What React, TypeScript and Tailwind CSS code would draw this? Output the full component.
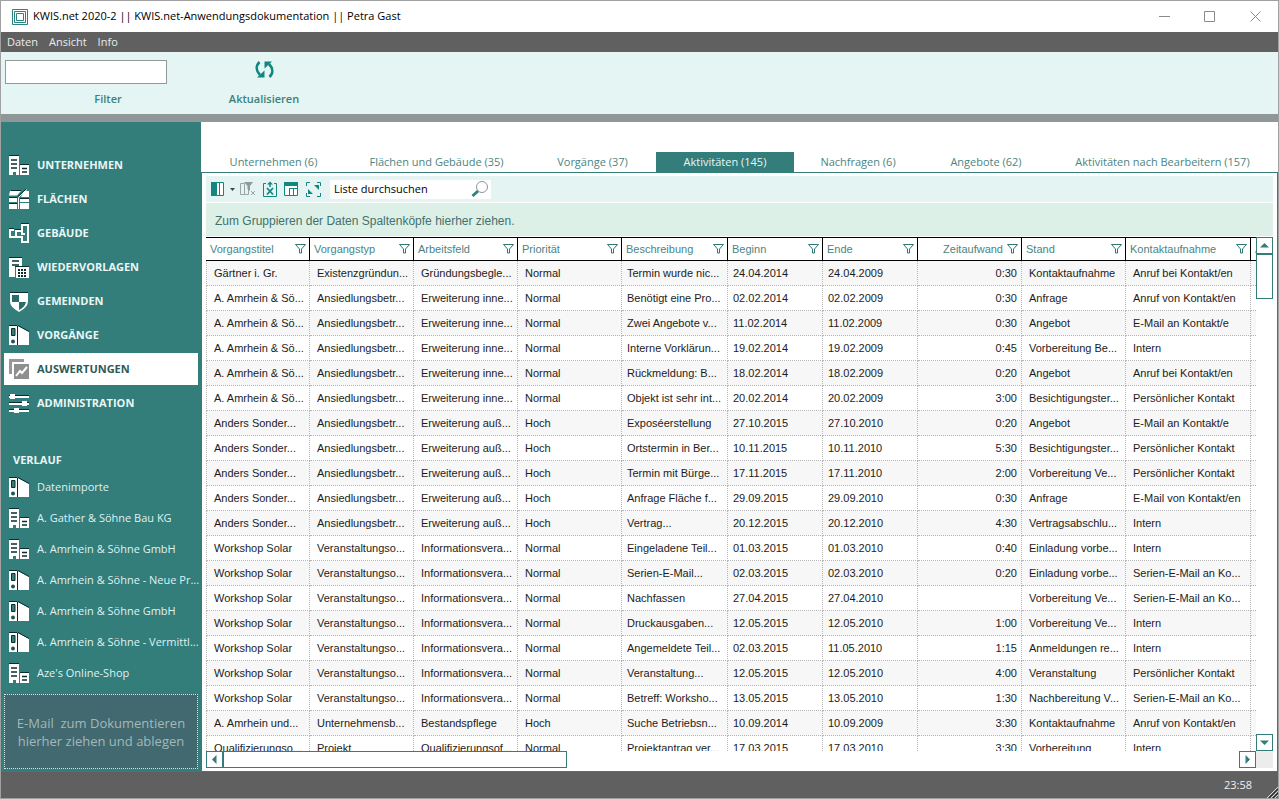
import { useState } from "react";
import type { ReactNode } from "react";

type IconName =
  | "company"
  | "area"
  | "building"
  | "calendar"
  | "shield"
  | "binder"
  | "chart"
  | "sliders";

const DARK = "#0a2e2d";

const icons: Record<IconName, ReactNode> = {
  company: (
    <>
      <path d="M0 1h10v19H7v-3H4v3H0zM11 10h9v10h-9z" fill="#fff" />
      <path d="M0 0.500h10M11 9.500h9" stroke={DARK} />
      <path d="M2 5h6M2 9h6M2 13h6M13 13.500h5M13 17h5" stroke={DARK} strokeWidth="1.600" />
    </>
  ),
  area: (
    <>
      <path d="M1 2h11L8 6.500H0zM15 2h5v6h-8zM0 9h8v4H0zM0 15h8v5H0zM11 10h9v3h-9zM11 14h9v6h-9z" fill="#fff" />
      <path d="M2 1.500h10M0 8.500h8M0 14.500h8M11 9.500h9" stroke={DARK} />
      <path d="M18 0.500L9.500 8.500V20" stroke="#fff" fill="none" />
      <path d="M17 0L8.500 8" stroke={DARK} fill="none" />
    </>
  ),
  building: (
    <>
      <path d="M1 6v8h12v5h6V2h-6v6H7v6M1 7h4M13 8v3h3" stroke="#fff" strokeWidth="2" fill="none" />
      <path d="M12 0.500h8M0 5.500h5M6 6.500h6" stroke={DARK} />
    </>
  ),
  calendar: (
    <>
      <path d="M0 1h13v8H6v11H0z" fill="#fff" />
      <path d="M0 0.500h13M6 9.500h14" stroke={DARK} />
      <path d="M3 4h7M3 8h7" stroke={DARK} strokeWidth="1.600" />
      <path d="M7 10h13v11H7z" fill="#fff" />
      <path d="M9 13h9M9 16h9M9 19h9" stroke={DARK} strokeWidth="2" strokeDasharray="2 1" />
    </>
  ),
  shield: (
    <>
      <path d="M1 2h18v8c0 5-4 8-9 11-5-3-9-6-9-11z" fill="#fff" />
      <path d="M1 1.500h18" stroke={DARK} />
      <path d="M3 4h7v7H3zM10 11h7c-1 4-3 6-7 8z" fill="#2b6b69" />
    </>
  ),
  binder: (
    <>
      <path d="M0 1h8v19H0zM9 1l11 6v13H9z" fill="#fff" />
      <path d="M0 0.500h8M9 0.500l11 6M8.500 1v19" stroke={DARK} fill="none" />
      <path d="M2.500 3.500h3.500v7H2.500z" fill="#337d7b" stroke={DARK} />
      <circle cx="4" cy="16.500" r="2" fill="#1d5553" />
    </>
  ),
  chart: (
    <>
      <path d="M0 0h15v3H3v12H0z" fill="#989898" />
      <path d="M5 5h15v15H5z" fill="#8f8f8f" />
      <path d="M7 17l4-5 2 2 5-6" stroke="#fff" strokeWidth="2" fill="none" />
    </>
  ),
  sliders: (
    <>
      <path d="M0 4h20M0 11h20M0 18h20" stroke="#fff" strokeWidth="2" />
      <path d="M0 2.500h20M0 9.500h20M0 16.500h20" stroke={DARK} />
      <path d="M1 1h5v5H1zM13 8h5v5h-5zM5 15h5v5H5z" fill="#fff" />
    </>
  ),
};

function NavIcon({ name }: { name: IconName }) {
  return (
    <svg className="h-[21px] w-5 shrink-0" viewBox="0 0 20 21" aria-hidden="true">
      {icons[name]}
    </svg>
  );
}

const navItems: { label: string; icon: IconName }[] = [
  { label: "UNTERNEHMEN", icon: "company" },
  { label: "FLÄCHEN", icon: "area" },
  { label: "GEBÄUDE", icon: "building" },
  { label: "WIEDERVORLAGEN", icon: "calendar" },
  { label: "GEMEINDEN", icon: "shield" },
  { label: "VORGÄNGE", icon: "binder" },
  { label: "AUSWERTUNGEN", icon: "chart" },
  { label: "ADMINISTRATION", icon: "sliders" },
];

const historyItems: { label: string; icon: IconName }[] = [
  { label: "Datenimporte", icon: "binder" },
  { label: "A. Gather & Söhne Bau KG", icon: "company" },
  { label: "A. Amrhein & Söhne GmbH", icon: "company" },
  { label: "A. Amrhein & Söhne - Neue Pr...", icon: "binder" },
  { label: "A. Amrhein & Söhne GmbH", icon: "binder" },
  { label: "A. Amrhein & Söhne - Vermittl...", icon: "binder" },
  { label: "Aze's Online-Shop", icon: "company" },
];

const tabs = [
  { label: "Unternehmen (6)", width: "w-[141px]" },
  { label: "Flächen und Gebäude (35)", width: "w-[185px]" },
  { label: "Vorgänge (37)", width: "w-[127px]" },
  { label: "Aktivitäten (145)", width: "w-[138px]" },
  { label: "Nachfragen (6)", width: "w-[128px]" },
  { label: "Angebote (62)", width: "w-[128px]" },
  { label: "Aktivitäten nach Bearbeitern (157)", width: "w-[225px]" },
];

const columns = [
  { label: "Vorgangstitel", width: "w-[104px]" },
  { label: "Vorgangstyp", width: "w-[104px]" },
  { label: "Arbeitsfeld", width: "w-[104px]" },
  { label: "Priorität", width: "w-[104px]" },
  { label: "Beschreibung", width: "w-[106px]" },
  { label: "Beginn", width: "w-[95px]" },
  { label: "Ende", width: "w-[95px]" },
  { label: "Zeitaufwand", width: "w-[104px]" },
  { label: "Stand", width: "w-[104px]" },
  { label: "Kontaktaufnahme", width: "w-[125px]" },
];

const rows = [
  ["Gärtner i. Gr.", "Existenzgründun...", "Gründungsbegle...", "Normal", "Termin wurde nic...", "24.04.2014", "24.04.2009", "0:30", "Kontaktaufnahme", "Anruf bei Kontakt/en"],
  ["A. Amrhein & Sö...", "Ansiedlungsbetr...", "Erweiterung inne...", "Normal", "Benötigt eine Pro...", "02.02.2014", "02.02.2009", "0:30", "Anfrage", "Anruf von Kontakt/en"],
  ["A. Amrhein & Sö...", "Ansiedlungsbetr...", "Erweiterung inne...", "Normal", "Zwei Angebote v...", "11.02.2014", "11.02.2009", "0:30", "Angebot", "E-Mail an Kontakt/e"],
  ["A. Amrhein & Sö...", "Ansiedlungsbetr...", "Erweiterung inne...", "Normal", "Interne Vorklärun...", "19.02.2014", "19.02.2009", "0:45", "Vorbereitung Be...", "Intern"],
  ["A. Amrhein & Sö...", "Ansiedlungsbetr...", "Erweiterung inne...", "Normal", "Rückmeldung: B...", "18.02.2014", "18.02.2009", "0:20", "Angebot", "Anruf bei Kontakt/en"],
  ["A. Amrhein & Sö...", "Ansiedlungsbetr...", "Erweiterung inne...", "Normal", "Objekt ist sehr int...", "20.02.2014", "20.02.2009", "3:00", "Besichtigungster...", "Persönlicher Kontakt"],
  ["Anders Sonder...", "Ansiedlungsbetr...", "Erweiterung auß...", "Hoch", "Exposéerstellung", "27.10.2015", "27.10.2010", "0:20", "Angebot", "E-Mail an Kontakt/e"],
  ["Anders Sonder...", "Ansiedlungsbetr...", "Erweiterung auß...", "Hoch", "Ortstermin in Ber...", "10.11.2015", "10.11.2010", "5:30", "Besichtigungster...", "Persönlicher Kontakt"],
  ["Anders Sonder...", "Ansiedlungsbetr...", "Erweiterung auß...", "Hoch", "Termin mit Bürge...", "17.11.2015", "17.11.2010", "2:00", "Vorbereitung Ve...", "Persönlicher Kontakt"],
  ["Anders Sonder...", "Ansiedlungsbetr...", "Erweiterung auß...", "Hoch", "Anfrage Fläche f...", "29.09.2015", "29.09.2010", "0:30", "Anfrage", "E-Mail von Kontakt/en"],
  ["Anders Sonder...", "Ansiedlungsbetr...", "Erweiterung auß...", "Hoch", "Vertrag...", "20.12.2015", "20.12.2010", "4:30", "Vertragsabschlu...", "Intern"],
  ["Workshop Solar", "Veranstaltungso...", "Informationsvera...", "Normal", "Eingeladene Teil...", "01.03.2015", "01.03.2010", "0:40", "Einladung vorbe...", "Intern"],
  ["Workshop Solar", "Veranstaltungso...", "Informationsvera...", "Normal", "Serien-E-Mail...", "02.03.2015", "02.03.2010", "0:20", "Einladung vorbe...", "Serien-E-Mail an Ko..."],
  ["Workshop Solar", "Veranstaltungso...", "Informationsvera...", "Normal", "Nachfassen", "27.04.2015", "27.04.2010", "", "Vorbereitung Ve...", "Serien-E-Mail an Ko..."],
  ["Workshop Solar", "Veranstaltungso...", "Informationsvera...", "Normal", "Druckausgaben...", "12.05.2015", "12.05.2010", "1:00", "Vorbereitung Ve...", "Intern"],
  ["Workshop Solar", "Veranstaltungso...", "Informationsvera...", "Normal", "Angemeldete Teil...", "02.03.2015", "11.05.2010", "1:15", "Anmeldungen re...", "Intern"],
  ["Workshop Solar", "Veranstaltungso...", "Informationsvera...", "Normal", "Veranstaltung...", "12.05.2015", "12.05.2010", "4:00", "Veranstaltung", "Persönlicher Kontakt"],
  ["Workshop Solar", "Veranstaltungso...", "Informationsvera...", "Normal", "Betreff: Worksho...", "13.05.2015", "13.05.2010", "1:30", "Nachbereitung V...", "Serien-E-Mail an Ko..."],
  ["A. Amrhein und...", "Unternehmensb...", "Bestandspflege", "Hoch", "Suche Betriebsn...", "10.09.2014", "10.09.2009", "3:30", "Kontaktaufnahme", "Anruf von Kontakt/en"],
  ["Qualifizierungso...", "Projekt", "Qualifizierungsof...", "Normal", "Projektantrag ver...", "17.03.2015", "17.03.2010", "3:30", "Vorbereitung", "Intern"],
];

function TitleBar() {
  return (
    <header className="flex h-[31px] shrink-0 items-center bg-white pl-[11px]">
      <svg className="size-4 shrink-0" viewBox="0 0 16 16" fill="none" stroke="#2a8482" aria-hidden="true">
        <path d="M0.500 0.500h15v15H0.500z" />
        <path d="M2.500 2.500h11v11h-11z" />
        <path d="M4.500 4.500h7v7h-7z" />
      </svg>
      <h1 className="ml-[5px] flex-1 text-[11px] text-black">
        KWIS.net 2020-2 || KWIS.net-Anwendungsdokumentation || Petra Gast
      </h1>
      <div className="flex">
        <button type="button" aria-label="Minimieren" className="flex h-[30px] w-[45px] items-center justify-center">
          <svg className="size-[11px]" viewBox="0 0 11 11" stroke="#8a8a8a" fill="none">
            <path d="M0 5.500h11" />
          </svg>
        </button>
        <button type="button" aria-label="Maximieren" className="flex h-[30px] w-[45px] items-center justify-center">
          <svg className="size-[11px]" viewBox="0 0 11 11" stroke="#8a8a8a" fill="none">
            <path d="M0.500 0.500h10v10h-10z" />
          </svg>
        </button>
        <button type="button" aria-label="Schließen" className="flex h-[30px] w-[46px] items-center justify-center">
          <svg className="size-[11px]" viewBox="0 0 11 11" stroke="#8a8a8a" fill="none">
            <path d="M0.500 0.500l10 10M10.500 0.500l-10 10" />
          </svg>
        </button>
      </div>
    </header>
  );
}

function Sidebar() {
  const [active, setActive] = useState("AUSWERTUNGEN");

  return (
    <aside className="flex w-[200px] shrink-0 flex-col bg-[#337d7b] px-[3px] pt-[27px] pb-[3px]">
      <nav className="flex flex-col gap-[2px]">
        {navItems.map((item) => (
          <button
            key={item.label}
            type="button"
            onClick={() => setActive(item.label)}
            className={`flex h-8 items-center gap-2 pl-[5px] text-[11px] font-bold ${
              item.label === active ? "bg-white text-[#2c5a58]" : "text-[#e9f7f6]"
            }`}
          >
            <NavIcon name={item.icon} />
            {item.label}
          </button>
        ))}
      </nav>

      <h2 className="mt-[29px] flex h-6 items-center pl-[9px] text-[11px] font-bold text-[#e9f7f6]">VERLAUF</h2>
      <ul>
        {historyItems.map((item, index) => (
          <li key={index}>
            <a href="#" className="flex h-[31px] items-center gap-2 pl-[5px] text-[11px] whitespace-nowrap text-[#dff2f1]">
              <NavIcon name={item.icon} />
              {item.label}
            </a>
          </li>
        ))}
      </ul>

      <div className="mt-auto flex h-[75px] items-center justify-center border border-dotted border-[#d5e5e5] bg-[#41696f] text-center text-[13px] leading-[18px] text-[#a3b8bb]">
        <p>
          E-Mail&nbsp; zum Dokumentieren
          <br />
          hierher ziehen und ablegen
        </p>
      </div>
    </aside>
  );
}

function FilterIcon() {
  return (
    <svg className="h-[10px] w-[11px] shrink-0" viewBox="0 0 11 10" fill="none" stroke="#2f7775" aria-hidden="true">
      <path d="M0.500 0.500h10L6.500 5v4h-2V5z" />
    </svg>
  );
}

function ListToolbar() {
  return (
    <div className="flex h-[26px] shrink-0 items-center bg-[#e4f4f3] pl-[5px]">
      <button type="button" aria-label="Spalten" className="flex items-center">
        <svg className="h-[14px] w-[13px]" viewBox="0 0 13 14" aria-hidden="true">
          <path d="M0.500 0.500h12v13h-12z" fill="#fff" stroke="#12867f" />
          <path d="M0 0h6v14H0z" fill="#12867f" />
          <path d="M8.500 0v14" stroke="#12867f" />
        </svg>
        <svg className="ml-[6px] h-[3px] w-[5px]" viewBox="0 0 5 3" aria-hidden="true">
          <path d="M0 0h5L2.500 3z" fill="#444" />
        </svg>
      </button>
      <button type="button" aria-label="Filter löschen" className="ml-[5px]">
        <svg className="h-4 w-4" viewBox="0 0 16 16" fill="none" stroke="#98a5a4" aria-hidden="true">
          <path d="M4.500 2.500h-4v11h4zM4.500 5v8.500h4V8" />
          <path d="M4 1h9L10 5v5L7.500 8V5z" fill="#8f9a99" stroke="none" />
          <path d="M11 10l4 4M15 10l-4 4" />
        </svg>
      </button>
      <button type="button" aria-label="Excel-Export" className="ml-[6px]">
        <svg className="h-4 w-4" viewBox="0 0 16 16" fill="none" stroke="#12867f" aria-hidden="true">
          <path d="M4 2.500H1.500v13h13v-13H12" />
          <path d="M8 6V2" strokeWidth="1.500" />
          <path d="M5 3.500h6L8 0.500z" fill="#12867f" stroke="none" />
          <path d="M5 7l6 6.500M11 7l-6 6.500" strokeWidth="1.800" />
        </svg>
      </button>
      <button type="button" aria-label="Layout" className="ml-[6px]">
        <svg className="h-[14px] w-[14px]" viewBox="0 0 14 14" fill="none" stroke="#12867f" aria-hidden="true">
          <path d="M0.500 0.500h13v13h-13z" fill="#fff" />
          <path d="M0 0h14v4H0z" fill="#12867f" stroke="none" />
          <path d="M5.500 6v7M5 6.500h9M9.500 7v6" />
        </svg>
      </button>
      <button type="button" aria-label="Vollbild" className="ml-2">
        <svg className="h-[15px] w-[15px]" viewBox="0 0 15 15" aria-hidden="true">
          <path d="M0.500 4V0.500H4M11 0.500h3.500V4M14.500 11v3.500H11M4 14.500H0.500V11" stroke="#12867f" fill="none" />
          <path d="M8 3h5v5zM2 7l5 5H2z" fill="#12867f" />
        </svg>
      </button>
      <div className="ml-[9px] flex h-[19px] w-[161px] items-center bg-white">
        <input
          type="text"
          aria-label="Liste durchsuchen"
          placeholder="Liste durchsuchen"
          className="min-w-0 flex-1 pl-1 text-[11px] outline-none placeholder:text-black"
        />
        <button type="button" aria-label="Suchen" className="mr-[2px]">
          <svg className="h-[18px] w-[18px]" viewBox="0 0 18 18" fill="none" aria-hidden="true">
            <circle cx="11" cy="7" r="5.500" stroke="#8a9897" />
            <path d="M7 11l-5.500 5" stroke="#2f807c" strokeWidth="3" />
          </svg>
        </button>
      </div>
    </div>
  );
}

function ActivityTable() {
  return (
    <table className="w-full table-fixed border-separate border-spacing-0 font-['Liberation_Sans',sans-serif] text-[11px] whitespace-nowrap">
      <colgroup>
        {columns.map((column) => (
          <col key={column.label} className={column.width} />
        ))}
        <col />
      </colgroup>
      <thead>
        <tr className="h-6">
          {columns.map((column) => (
            <th
              key={column.label}
              className="border-y border-r border-black p-0 pr-[3px] pl-1 font-normal text-[#4a8583]"
            >
              <div className={`flex items-center gap-1 ${column.label === "Zeitaufwand" ? "justify-end" : "justify-between"}`}>
                {column.label}
                <FilterIcon />
              </div>
            </th>
          ))}
          <th className="overflow-hidden border-y border-black p-0 pl-1 text-left font-normal text-[#4a8583]">A</th>
        </tr>
      </thead>
      <tbody>
        {rows.map((row, rowIndex) => (
          <tr key={rowIndex} className="h-[25px] odd:bg-[#f7f7f7]">
            {row.map((cell, index) => (
              <td
                key={index}
                className={`overflow-hidden border-r border-b border-dotted border-[#b5b5b5] p-0 text-[#1c1c1c] first:border-l ${
                  index === 7 ? "pr-1 text-right" : index === 5 || index === 6 || index === 4 ? "pl-[5px]" : "pl-[7px]"
                }`}
              >
                {cell}
              </td>
            ))}
            <td className="border-b border-dotted border-[#b5b5b5] p-0" />
          </tr>
        ))}
      </tbody>
    </table>
  );
}

function ScrollButton({ label, path }: { label: string; path: string }) {
  return (
    <button
      type="button"
      aria-label={label}
      className="flex size-[17px] shrink-0 items-center justify-center border border-[#337d7b] bg-white"
    >
      <svg className="size-[9px]" viewBox="0 0 9 9" aria-hidden="true">
        <path d={path} fill="#337d7b" />
      </svg>
    </button>
  );
}

export default function App() {
  const [activeTab, setActiveTab] = useState("Aktivitäten (145)");

  return (
    <div className="flex h-screen flex-col overflow-hidden border border-[#a0a0a0] bg-white font-['Open_Sans','Noto_Sans',sans-serif]">
      <TitleBar />

      <nav className="flex h-5 shrink-0 items-center gap-[11px] bg-[#606060] pl-[6px] text-[11px] text-[#ececec]">
        <button type="button">Daten</button>
        <button type="button">Ansicht</button>
        <button type="button">Info</button>
      </nav>

      <div className="flex h-[62px] shrink-0 items-start gap-1 bg-[#e4f5f3] text-[11px] font-semibold text-[#3d807d]">
        <div className="flex w-[210px] flex-col pt-2 pl-1">
          <input id="filter" type="text" className="h-6 w-[162px] border border-[#8f9a99] bg-white px-1 outline-none" />
          <label htmlFor="filter" className="mt-[7px] text-center leading-4">
            Filter
          </label>
        </div>
        <button type="button" className="flex w-[98px] flex-col items-center pt-2">
          <svg className="size-[19px]" viewBox="0 0 19 19" aria-hidden="true">
            <path d="M4.500 2C0.500 6 1 11 5 15M14.500 17c4-4 3.500-9-0.500-13" fill="none" stroke="#12867f" strokeWidth="2.600" />
            <path d="M2 17.500h7.500V10.500zM17 1.500H9.500V8.500z" fill="#12867f" />
          </svg>
          <span className="mt-3 leading-4">Aktualisieren</span>
        </button>
      </div>
      <div className="h-2 shrink-0 bg-[#8f9897]" />

      <div className="flex min-h-0 flex-1">
        <Sidebar />

        <main className="flex min-w-0 flex-1 flex-col pt-[30px]">
          <div role="tablist" className="flex h-5 shrink-0 pl-[2px] text-[11px]">
            {tabs.map((tab) => (
              <button
                key={tab.label}
                type="button"
                role="tab"
                aria-selected={tab.label === activeTab}
                onClick={() => setActiveTab(tab.label)}
                className={`${tab.width} whitespace-nowrap ${
                  tab.label === activeTab ? "bg-[#337d7b] text-[#e9f7f6]" : "text-[#4a8583]"
                }`}
              >
                {tab.label}
              </button>
            ))}
          </div>

          <section className="flex min-h-0 flex-1 flex-col border border-[#337d7b] px-1 py-[3px]">
            <ListToolbar />
            <div className="my-px flex h-[33px] shrink-0 items-center bg-[#dcf0e7] pt-[2px] pl-[9px] font-['Liberation_Sans',sans-serif] text-xs text-[#44706c]">
              Zum Gruppieren der Daten Spaltenköpfe hierher ziehen.
            </div>

            <div className="flex min-h-0 flex-1">
              <div className="min-w-0 flex-1 overflow-hidden">
                <ActivityTable />
              </div>
              <div className="flex w-[17px] shrink-0 flex-col">
                <ScrollButton label="Nach oben" path="M0 6.500h9L4.500 2z" />
                <div className="h-[45px] border border-[#337d7b] bg-white" />
                <div className="flex-1" />
                <ScrollButton label="Nach unten" path="M0 2.500h9L4.500 7z" />
              </div>
            </div>

            <div className="flex h-[17px] shrink-0">
              <ScrollButton label="Nach links" path="M6.500 0v9L2 4.500z" />
              <div className="w-[344px] border border-[#337d7b] bg-white" />
              <div className="flex-1" />
              <ScrollButton label="Nach rechts" path="M2.500 0v9L7 4.500z" />
              <div className="w-[17px] bg-[#ececec]" />
            </div>
          </section>
        </main>
      </div>

      <footer className="flex h-[26px] shrink-0 justify-end bg-[#606060]">
        <div className="flex items-center text-[11px] text-[#f0f0f0]">
          23:58
          <svg className="ml-[15px] size-[11px] self-end" viewBox="0 0 11 11" aria-hidden="true">
            <path d="M0 11L11 0M4 11l7-7M8 11l3-3" stroke="#d8d8d8" />
            <path d="M2 11l9-9M6 11l5-5" stroke="#222" />
          </svg>
        </div>
      </footer>
    </div>
  );
}
